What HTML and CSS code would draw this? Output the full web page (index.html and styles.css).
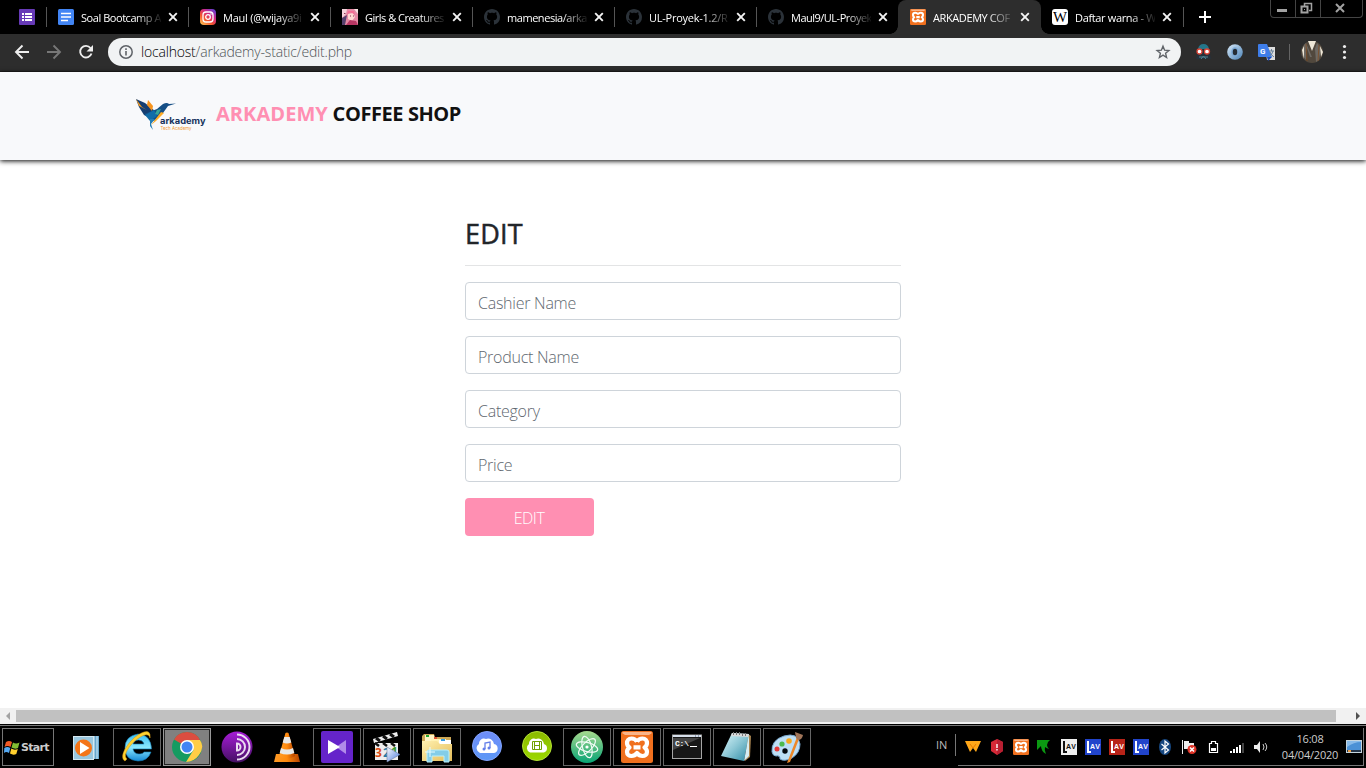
FILE: index.html
```html
<!DOCTYPE html>
<html lang="en">
<head>
<meta charset="utf-8">
<title>ARKADEMY COFFEE SHOP</title>
<link rel="stylesheet" href="styles.css">
</head>
<body>
<svg class="defs" width="0" height="0">
  <defs>
    <symbol id="close" viewBox="0 0 10 10"><path d="M1.200 1.200L8.800 8.800M8.800 1.200L1.200 8.800" stroke="#f4f4f4" stroke-width="1.900"/></symbol>
    <symbol id="github" viewBox="0 0 16 16"><path fill="#2b3239" fill-rule="evenodd" d="M8 0C3.580 0 0 3.580 0 8c0 3.540 2.290 6.530 5.470 7.590.4.07.55-.17.55-.38 0-.19-.01-.82-.01-1.490-2.010.37-2.530-.49-2.690-.94-.09-.23-.48-.94-.82-1.130-.28-.15-.68-.52-.01-.53.63-.01 1.080.58 1.230.82.72 1.210 1.870.87 2.330.66.07-.52.28-.87.51-1.070-1.780-.2-3.640-.89-3.640-3.950 0-.87.31-1.590.82-2.150-.08-.2-.36-1.020.08-2.120 0 0 .67-.21 2.200.82.64-.18 1.320-.27 2-.27s1.360.09 2 .27c1.530-1.040 2.200-.82 2.200-.82.44 1.100.16 1.920.08 2.120.51.56.82 1.270.82 2.150 0 3.070-1.870 3.750-3.650 3.950.29.25.54.73.54 1.480 0 1.070-.01 1.930-.01 2.200 0 .21.15.46.55.38A8.010 8.010 0 0016 8c0-4.420-3.580-8-8-8z"/></symbol>
    <symbol id="xampp" viewBox="0 0 32 32"><rect width="32" height="32" rx="2.500" fill="#f0701e"/><path d="M1 2Q1 1 3 1H29Q31 1 31 2L28 4H4Z" fill="#f9b58a"/><path d="M16 10.500C14 7.500 12 7.500 10.500 7.500C7.500 7.500 6 9.500 6 12C6 14 7 15.500 8.500 16.500C7 17.500 6 19 6 21C6 23.500 8 25 10.500 25C13 25 14.500 24 16 22C17.500 24 19 25 21.500 25C24 25 26 23.500 26 21C26 19 25 17.500 23.500 16.500C25 15.500 26 14 26 12C26 9.500 24.500 7.500 21.500 7.500C20 7.500 18 7.500 16 10.500M12.500 16.300H19.500" fill="none" stroke="#fff" stroke-width="4.200" stroke-linejoin="round"/></symbol>
    <linearGradient id="insta" x1="0" y1="1" x2=".8" y2="0"><stop offset="0" stop-color="#ffd35a"/><stop offset=".4" stop-color="#f5532d"/><stop offset=".7" stop-color="#cf2886"/><stop offset="1" stop-color="#6a3fd0"/></linearGradient>
    <linearGradient id="tor" x2="0" y2="1"><stop stop-color="#a61cd6"/><stop offset="1" stop-color="#451063"/></linearGradient>
    <linearGradient id="ie" x2="0" y2="1"><stop stop-color="#3bbdf0"/><stop offset=".5" stop-color="#8be9ff"/><stop offset="1" stop-color="#1689d5"/></linearGradient>
    <linearGradient id="cone" x2="1" y2="0"><stop stop-color="#ff9b26"/><stop offset=".5" stop-color="#ff8a0e"/><stop offset="1" stop-color="#b64300"/></linearGradient>
    <linearGradient id="folder" x2="1" y2="1"><stop stop-color="#fff1b0"/><stop offset="1" stop-color="#e4bc59"/></linearGradient>
    <linearGradient id="blue" x2="0" y2="1"><stop stop-color="#6f8dfa"/><stop offset="1" stop-color="#5c98f5"/></linearGradient>
    <linearGradient id="green" x2="0" y2="1"><stop stop-color="#8bb900"/><stop offset="1" stop-color="#9cd800"/></linearGradient>
    <linearGradient id="atom" x2="0" y2="1"><stop stop-color="#a7d98e"/><stop offset="1" stop-color="#08a475"/></linearGradient>
    <linearGradient id="note" x2="1" y2="1"><stop stop-color="#def8fc"/><stop offset=".5" stop-color="#8cc7d5"/><stop offset="1" stop-color="#2d8ba5"/></linearGradient>
    <linearGradient id="orb" x2="1" y2="1"><stop stop-color="#d9ebfa"/><stop offset="1" stop-color="#4b82b6"/></linearGradient>
    <linearGradient id="play" x2="1" y2="1"><stop stop-color="#fff"/><stop offset="1" stop-color="#4779dd"/></linearGradient>
  </defs>
</svg>

<header class="browser">
  <div class="tabs">
    <div class="tab pinned">
      <svg class="fav" viewBox="0 0 16 16"><rect width="16" height="16" rx="1" fill="#673ab7"/><path d="M3 5h2M6 5h7M3 8h2M6 8h7M3 11h2M6 11h7" stroke="#fff" stroke-width="1.800"/></svg>
    </div>
    <div class="tab">
      <svg class="fav" viewBox="0 0 16 16"><rect width="16" height="16" rx="1.500" fill="#4285f4"/><path d="M3 4.500h10M3 8h10M3 11.500h7" stroke="#fff" stroke-width="1.600"/></svg>
      <span class="label t-soal">Soal Bootcamp A</span><svg class="close"><use href="#close"/></svg>
    </div>
    <div class="tab">
      <svg class="fav" viewBox="0 0 16 16"><rect width="16" height="16" rx="4" fill="url(#insta)"/><rect x="3" y="3" width="10" height="10" rx="3" fill="none" stroke="#fff" stroke-width="1.300"/><circle cx="8" cy="8" r="2.300" fill="none" stroke="#fff" stroke-width="1.300"/><circle cx="11" cy="5" r=".8" fill="#fff"/></svg>
      <span class="label t-maul">Maul (@wijaya9i</span><svg class="close"><use href="#close"/></svg>
    </div>
    <div class="tab">
      <svg class="fav" viewBox="0 0 16 16"><rect width="16" height="16" fill="#e58aa5"/><path d="M0 0h5L4 5 0 9z" fill="#f3d4dc"/><path d="M0 9l5-3-2 10H0z" fill="#55406d"/><path d="M6 5l5-1 2 4-3 4-4-2z" fill="#ffd9d2"/><path d="M5 6q3-5 8 0l-1-4H6z" fill="#f46d94"/><path d="M4 16l4-5 6 1 2 4z" fill="#b83663"/><path d="M12 0h4v5z" fill="#f9e5e4"/><path d="M2 4.500h1.500M8 7h1M11 7h1" stroke="#8e3554"/></svg>
      <span class="label t-girls">Girls &amp; Creatures</span><svg class="close"><use href="#close"/></svg>
    </div>
    <div class="tab">
      <svg class="fav"><use href="#github"/></svg>
      <span class="label t-mam">mamenesia/arka</span><svg class="close"><use href="#close"/></svg>
    </div>
    <div class="tab">
      <svg class="fav"><use href="#github"/></svg>
      <span class="label t-ul">UL-Proyek-1.2/R</span><svg class="close"><use href="#close"/></svg>
    </div>
    <div class="tab before-active">
      <svg class="fav"><use href="#github"/></svg>
      <span class="label t-maul9">Maul9/UL-Proyek</span><svg class="close"><use href="#close"/></svg>
    </div>
    <div class="tab active">
      <svg class="fav"><use href="#xampp"/></svg>
      <span class="label t-ark">ARKADEMY COF</span><svg class="close"><use href="#close"/></svg>
    </div>
    <div class="tab last">
      <svg class="fav" viewBox="0 0 16 16"><rect width="16" height="16" rx="3" fill="#fff"/><text x="1" y="12.500" class="wiki" textLength="14" lengthAdjust="spacingAndGlyphs">W</text></svg>
      <span class="label t-daftar">Daftar warna - W</span><svg class="close"><use href="#close"/></svg>
    </div>
    <svg class="newtab" viewBox="0 0 12 12"><path d="M6 0v12M0 6h12" stroke="#fff" stroke-width="2"/></svg>
    <div class="window-buttons">
      <span><svg width="25" height="17"><path d="M6 10.500h10" stroke="#a2a2a2" stroke-width="3"/></svg></span>
      <span><svg width="25" height="17"><path d="M8.500 6V3.500h7v7H13" fill="none" stroke="#a2a2a2" stroke-width="1.500"/><rect x="5.500" y="6.500" width="6" height="6" fill="none" stroke="#a2a2a2" stroke-width="2"/><path d="M8 9.500h1" stroke="#a2a2a2"/></svg></span>
      <span class="wide"><svg width="41" height="17"><path d="M15 4l8 8M23 4l-8 8" stroke="#a2a2a2" stroke-width="2"/></svg></span>
    </div>
  </div>
  <div class="toolbar">
    <svg class="nav-icons" width="108" height="36"><g fill="none" stroke-width="1.900"><path d="M29 18H16.500M22.500 11.500L16 18l6.500 6.500" stroke="#eee"/><path d="M47 18h12.500M53.500 11.500L60 18l-6.500 6.500" stroke="#777"/><path d="M90.500 14A5.800 5.800 0 1 0 91.500 19.500" stroke="#eee"/></g><path d="M93 11v6.500h-6.500z" fill="#eee"/></svg>
    <div class="address">
      <svg class="info" viewBox="0 0 16 16"><circle cx="8" cy="8" r="6.200" fill="none" stroke="#5f6368" stroke-width="1.500"/><path d="M8 7v4.500M8 4.300v1.600" stroke="#5f6368" stroke-width="1.600"/></svg>
      <span class="url"><b>localhost</b>/arkademy-static/edit.php</span>
      <svg class="star" viewBox="0 0 16 16"><path d="M8 2.200l1.600 4 4.300.3-3.300 2.800 1 4.200L8 11.200l-3.600 2.300 1-4.200-3.300-2.800 4.300-.3z" fill="none" stroke="#5f6368" stroke-width="1.400"/></svg>
    </div>
    <svg class="extensions" width="185" height="36">
      <path d="M15 25l2-9q1-6 5.500-6t5.500 6l2 9z" fill="#25313b"/><path d="M17 15q1-5 5.500-5t5.500 5z" fill="#24768a"/><path d="M18 23h9M20 25l2.500-3 2.500 3" fill="none" stroke="#508395"/><circle cx="18.500" cy="17.500" r="2.500" fill="#fff" stroke="#d84335" stroke-width="1.300"/><circle cx="26" cy="17.500" r="2.500" fill="#fff" stroke="#d84335" stroke-width="1.300"/>
      <circle cx="54" cy="18" r="7.800" fill="url(#orb)"/><ellipse cx="54" cy="18" rx="3" ry="4" fill="#252d36" stroke="#7daad7" stroke-width="1.500"/>
      <path d="M84 13h10v13H86z" fill="#ddd"/><path d="M78 10h8l5 13H78q-1 0-1-1V11q0-1 1-1" fill="#3e7de9"/><text x="79" y="19.500" class="gicon">G</text><path d="M88 17h5M90.500 15v2M88 23q3-2 4-6M89 18q1 3 4 5" stroke="#68829b" fill="none"/><path d="M86 23h5l-4 4z" fill="#1b4dbe"/>
      <path d="M108.500 10v16" stroke="#646464"/>
      <circle cx="131" cy="18" r="11" fill="#51483d"/><path d="M123 11l2-2 6 14 5-14 4 5-2 12-3 2-1-13-3 8h-2l-3-9-1 12-4-5z" fill="#6d6963"/><path d="M127 7h8l-4 10zM121 16l2-4v13zM139 12l3 6-2 5z" fill="#eee7d7"/><path d="M125 10l1 17M138 11l-1 16" stroke="#824819" stroke-width=".7"/>
      <g fill="#eee"><circle cx="163.500" cy="12.500" r="1.600"/><circle cx="163.500" cy="18" r="1.600"/><circle cx="163.500" cy="23.500" r="1.600"/></g>
    </svg>
  </div>
</header>

<main class="page">
  <nav class="navbar">
    <svg class="logo" viewBox="0 0 72 34">
      <path d="M0 0l9 4 10 8-3 8-8-4-5-8z" fill="#153e72"/><path d="M0 0l6 8 5 3-8-4z" fill="#f59c22"/><path d="M12 1l5 6-1 5-5-6z" fill="#f7941d"/><path d="M8 15l13-5 6-5q4-2 6 0l7-.500-8 2.500-5 7-9 8z" fill="#164f86"/><path d="M9 16l9-5 3 6-7 5z" fill="#116da9"/><path d="M21 11l4-1-3 6-3-1z" fill="#35a69b"/><path d="M25 13l3 1-8 8-5 4z" fill="#ffac24"/><path d="M14 20h5l-4 5 2 6-3-4z" fill="#267eb5"/>
      <text x="24" y="25" class="logo-name" textLength="45.500" lengthAdjust="spacingAndGlyphs">arkademy</text><text x="24.500" y="31" class="logo-sub" textLength="31" lengthAdjust="spacingAndGlyphs">Tech Academy</text>
    </svg>
    <span class="brand"><span class="pink">ARKADEMY</span> COFFEE SHOP</span>
  </nav>
  <form class="form">
    <h3>EDIT</h3>
    <hr>
    <input type="text" placeholder="Cashier Name">
    <input type="text" placeholder="Product Name">
    <input type="text" placeholder="Category">
    <input type="text" placeholder="Price">
    <button type="button">EDIT</button>
  </form>
</main>

<div class="scrollbar"><i class="left"></i><div class="thumb"></div><i class="right"></i></div>

<footer class="taskbar">
  <div class="start"><svg width="16" height="15" viewBox="0 0 16 15"><path d="M2 2q3-2 6 0L6.500 7q-3-2-6 0z" fill="#f05a26"/><path d="M9 2.500q3 2 6.500 0L14 8q-3 1.500-6.500-.5z" fill="#83be32"/><path d="M.3 8q3-2 6 0L5 13q-3-2-5 0z" fill="#55a9f2"/><path d="M7.300 8.500q3 2 6.500.5l-1.500 5q-3 1.500-6.300-.5z" fill="#ffd02e"/></svg><span>Start</span></div>
  <div class="apps">
    <div class="app"><svg viewBox="0 0 32 32"><path d="M10 5h18v23H10z" fill="#68a6cb"/><path d="M23 5v23M26 5v23" stroke="#d3ecfb"/><rect x="2.500" y="5.500" width="20" height="23" fill="#9ac7df" stroke="#d6e8f0"/><circle cx="12.500" cy="17" r="8.500" fill="#f47518"/><path d="M9 11v12l9.500-6z" fill="#fff"/></svg></div>
    <div class="app framed"><svg viewBox="0 0 32 32"><path d="M30.500 18H12q1 5 6 5 4 0 5-2h7q-3 9-13 9Q4 29 4 17T17 3q13 1 13.500 15zM12 13h11q-1-4-5.500-4T12 13z" fill="url(#ie)" stroke="#137fba" stroke-width=".6"/><path d="M4 30C-4 26 10 5 23 1q7-2 6 6-1-4-5-3C13 7 0 24 6 28z" fill="#ffd330" stroke="#d59210" stroke-width=".5"/></svg></div>
    <div class="app framed selected"><svg viewBox="0 0 32 32"><circle cx="16" cy="16" r="15" fill="#159b61"/><path d="M16 16L3 8.500Q7 1 16 1t13 8H16z" fill="#db4d40"/><path d="M16 9h13q5 7-1 15-5 7-13 7l7.500-12z" fill="#ffcd46"/><circle cx="16" cy="16" r="7" fill="#fff"/><circle cx="16" cy="16" r="5.500" fill="#4285f4"/></svg></div>
    <div class="app"><svg viewBox="0 0 32 32"><circle cx="16" cy="16" r="15.500" fill="url(#tor)"/><path d="M16 12.500a3.500 3.500 0 0 1 0 7zM16 8a8 8 0 0 1 0 16M16 3.500a12.500 12.500 0 0 1 0 25" fill="none" stroke="#eadcf0" stroke-width="2"/></svg></div>
    <div class="app"><svg viewBox="0 0 32 32"><path d="M5 23h22l2 8H3z" fill="url(#cone)"/><path d="M14.500 2q1.500-1 3 0L24 25q-8 5-16 0z" fill="url(#cone)"/><path d="M13.300 6h5.400l1.600 5.500q-4.300 2-8.600 0zM10 17q6 3 12 0l1.300 5q-7.300 3-14.600 0z" fill="#e8e8e8"/></svg></div>
    <div class="app framed"><svg viewBox="0 0 32 32"><rect width="32" height="32" rx="2" fill="#6524ca"/><path d="M25 9v14l-10-7z" fill="#b18be9"/><path d="M7 9l12 7-12 7z" fill="#fff"/></svg></div>
    <div class="app framed"><svg viewBox="0 0 32 32"><path d="M2 8L26 1l1 4L3 12z" fill="#eee"/><path d="M5 7l4 3M12 5l4 3M19 3l4 3" stroke="#111" stroke-width="3"/><rect x="4" y="12" width="23" height="17" fill="#eee"/><path d="M4 12l4 3M12 12l4 3M20 12l4 3" stroke="#111" stroke-width="2.500"/><text x="4" y="26" class="clip" fill="#dc4b14">3</text><text x="12" y="26" class="clip" fill="#287aa5">2</text><text x="20" y="25" class="clip" fill="#35952a">1</text><path d="M16 16v15l13-7.500z" fill="url(#play)" stroke="#6b7c9d" stroke-width=".6"/></svg></div>
    <div class="app framed"><svg viewBox="0 0 32 32"><path d="M1 5l2-2h10l1 3h16v22H1z" fill="#cba757"/><rect x="4" y="4" width="9" height="6" fill="#fff4c4"/><rect x="5" y="4" width="3" height="2" fill="#21a631"/><path d="M10 8h15v5H10z" fill="#fff2b4"/><path d="M13 6h3v2h-3z" fill="#dc5434"/><path d="M18 9h12v4H18z" fill="#fff"/><path d="M20 8h4v2h-4z" fill="#349de5"/><path d="M1 10h15l3 3h12v17H1z" fill="url(#folder)"/><path d="M6 31V21q0-2 2-2h18q2 0 2 2v10h-5v-6H11v6z" fill="#83cde8" stroke="#b9effb"/><path d="M9 16v10M4 21h10" stroke="#e8fcff"/></svg></div>
    <div class="app"><svg viewBox="0 0 32 32"><circle cx="16" cy="15" r="14.500" fill="url(#blue)" stroke="#83a3ff"/><path d="M9 22a5 5 0 0 1-1-9 5 5 0 0 1 7-5 6 6 0 0 1 8 5 4.600 4.600 0 0 1 0 9z" fill="#fff"/><path d="M14 18v-6l5-1v6" fill="none" stroke="#647fe9" stroke-width="1.300"/><circle cx="13" cy="18" r="1.500" fill="#647fe9"/><circle cx="18" cy="17" r="1.500" fill="#647fe9"/></svg></div>
    <div class="app"><svg viewBox="0 0 32 32"><circle cx="16" cy="15" r="14.500" fill="url(#green)" stroke="#b3df35"/><path d="M9 21.500a4.800 4.800 0 0 1-1-8.500 5 5 0 0 1 7-5 6 6 0 0 1 8 5 4.500 4.500 0 0 1 0 8.500z" fill="#fff"/><path d="M11.500 10.500h9v8h-9zM13.500 14.500h5M13.500 10.500v8M18.500 10.500v8" stroke="#71a100" fill="none"/></svg></div>
    <div class="app framed"><svg viewBox="0 0 32 32"><circle cx="16" cy="16" r="16" fill="url(#atom)"/><g fill="none" stroke="#f0faf4" stroke-width="1.200"><ellipse cx="16" cy="16" rx="11" ry="4.500" transform="rotate(15 16 16)"/><ellipse cx="16" cy="16" rx="11" ry="4.500" transform="rotate(75 16 16)"/><ellipse cx="16" cy="16" rx="11" ry="4.500" transform="rotate(135 16 16)"/></g><circle cx="16" cy="16" r="1.600" fill="#fff"/></svg></div>
    <div class="app framed"><svg><use href="#xampp"/></svg></div>
    <div class="app framed"><svg viewBox="0 0 32 32"><rect x="1.500" y="4" width="29" height="23.500" fill="#181818" stroke="#a5a5a5"/><path d="M2 5h28" stroke="#d7e0eb" stroke-width="2"/><path d="M2 7h27L2 19z" fill="#444"/><text x="4" y="15" class="cmd" textLength="14">C:\</text><path d="M19 15.500h7" stroke="#fff"/><path d="M24 5h1M27 5h1" stroke="#546783"/></svg></div>
    <div class="app framed"><svg viewBox="0 0 32 32"><path d="M27 3l3 2-1 21-5 4z" fill="#a98551"/><path d="M11 2l17 1-5 27L0 25z" fill="url(#note)"/><path d="M28 3l-5 27 5-5z" fill="#d5edf3"/><path d="M11 2l17 1-1 3-17-1z" fill="#d9d9d9"/><path d="M12.500 1v3M15.500 1v3M18.500 1v3M21.500 2v3M24.500 2v3" stroke="#777"/></svg></div>
    <div class="app framed"><svg viewBox="0 0 32 32"><path d="M1 21Q0 9 13 5q14-4 16 8 0 9-8 14-8 4-12 1 0-4-4-3-3 0-4-4z" fill="#bddff5" stroke="#76a6ce"/><circle cx="6" cy="18" r="2.500" fill="#e33a3a"/><circle cx="11" cy="13" r="2.600" fill="#4cba4c"/><circle cx="18" cy="10" r="2.800" fill="#f8a91c"/><circle cx="14" cy="20" r="2.700" fill="#05090e"/><path d="M26 6l2 2-9 23-3 1z" fill="#ed8828"/><path d="M24 1l8 3q-1 5-5 5l-2-2z" fill="#a17559"/></svg></div>
  </div>
  <div class="tray">
    <span class="lang">IN</span>
    <div class="tray-icons">
      <svg viewBox="0 0 16 16"><path d="M0 2h16l-5 11-3-4-3 4z" fill="#ffa719"/><path d="M5 5l3 4 3-4" fill="none" stroke="#e87b00"/></svg>
      <svg viewBox="0 0 16 16"><path d="M8 0l6 3v9l-6 4-6-4V3z" fill="#d62937"/><path d="M8 0l6 3v9l-6 4z" fill="#b81f31"/><path d="M8 5v4M8 10v1.500" stroke="#fff" stroke-width="1.400"/></svg>
      <svg><use href="#xampp"/></svg>
      <svg viewBox="0 0 16 16"><path d="M0 1h13q-3 2-3 5 0 2 2 4-3-1-4-2-1 3 1 7Q4 12 4 7L0 11z" fill="#0b9912"/></svg>
      <svg viewBox="0 0 16 16" class="lav"><rect width="16" height="16" fill="#eee"/><path d="M3 2v11h3" stroke="#111" stroke-width="2" fill="none"/><text x="5" y="10" fill="#111" textLength="10">AV</text></svg>
      <svg viewBox="0 0 16 16" class="lav"><rect width="16" height="16" fill="#2144cb"/><path d="M3 2v11h3" stroke="#fff" stroke-width="2" fill="none"/><text x="5" y="10" fill="#fff" textLength="10">AV</text></svg>
      <svg viewBox="0 0 16 16" class="lav"><rect width="16" height="16" fill="#b82318"/><path d="M3 2v11h3" stroke="#fff" stroke-width="2" fill="none"/><text x="5" y="10" fill="#fff" textLength="10">AV</text></svg>
      <svg viewBox="0 0 16 16" class="lav"><rect width="16" height="16" fill="#2144cb"/><path d="M3 2v11h3" stroke="#fff" stroke-width="2" fill="none"/><text x="5" y="10" fill="#fff" textLength="10">AV</text></svg>
      <svg viewBox="0 0 16 16"><ellipse cx="8" cy="8" rx="6" ry="8" fill="#164780"/><path d="M4.500 5l7 6L8 14V2l3.500 3-7 6" fill="none" stroke="#fff" stroke-width="1.200"/></svg>
      <svg viewBox="0 0 16 16"><path d="M1.500 1v14" stroke="#eee"/><path d="M3 2h5v2h5v6H3z" fill="#eee"/><circle cx="11" cy="10.500" r="4.500" fill="#df3327"/><path d="M9 8.500l4 4M13 8.500l-4 4" stroke="#fff" stroke-width="1.500"/></svg>
      <svg viewBox="0 0 16 16"><path d="M6.500 2.500h4v2h2v9h-8v-9h2z" fill="none" stroke="#fff" stroke-width="1.200"/><path d="M6 9h5v3H6z" fill="#fff"/></svg>
      <svg viewBox="0 0 16 16"><path d="M2 14v-2M5 14v-4M8 14V8M11 14V6" stroke="#fff" stroke-width="2"/><path d="M14 14V4" stroke="#444" stroke-width="2"/></svg>
      <svg viewBox="0 0 16 16"><path d="M1 6h3l3-4v12l-3-4H1z" fill="#eee"/><path d="M10 5q2 3 0 6M12 4q3.500 4 0 8" fill="none" stroke="#ccc"/></svg>
    </div>
    <div class="clock"><span>16:08</span><span>04/04/2020</span></div>
    <svg class="desktop" viewBox="0 0 16 14"><rect x=".5" y=".5" width="15" height="12" fill="#4b91d6" stroke="#c5d4dd"/><path d="M1 7q7-5 14-5V1H1z" fill="#87bae9"/><path d="M1 10h14v2H1z" fill="#25364b"/><path d="M2 10h3v2H2z" fill="#ed9f45"/></svg>
  </div>
</footer>
</body>
</html>
```
FILE: styles.css
```css
* { box-sizing: border-box; }

body {
  margin: 0;
  width: 1366px;
  height: 768px;
  overflow: hidden;
  display: flex;
  flex-direction: column;
  background: #fff;
  font-family: "Open Sans", "Noto Sans", sans-serif;
}

svg { display: block; flex: none; }
.defs { position: absolute; }

.browser { height: 72px; background: #2d2d2d; border-bottom: 1px solid #211f1f; }
.tabs { display: flex; height: 34px; background: #000; }
.tab { display: flex; align-items: center; width: 142px; height: 34px; padding-left: 12px; position: relative; }
.tab::after { content: ""; position: absolute; right: -1px; top: 7px; height: 20px; width: 1px; background: #555; }
.tab.pinned { width: 46px; padding-left: 19px; }
.tab.active { width: 143px; background: #2d2d2d; border-radius: 8px 8px 0 0; }
.tab.active::before,
.tab.active::after {
  content: "";
  display: block;
  position: absolute;
  top: auto;
  bottom: 0;
  width: 8px;
  height: 8px;
  background: radial-gradient(circle at 0 0, transparent 7.5px, #2d2d2d 8px);
}
.tab.active::before { left: -8px; }
.tab.active::after { right: -8px; transform: scaleX(-1); }
.tab.before-active::after { display: none; }
.tab.last { padding-left: 11px; }
.fav { width: 16px; height: 16px; }
.label {
  width: 80px;
  margin-left: 7px;
  white-space: nowrap;
  color: #fff;
  font-size: 11px;
  line-height: 17px;
  letter-spacing: -.36px;
  -webkit-mask-image: linear-gradient(90deg, #000 68%, rgba(0, 0, 0, .08));
  mask-image: linear-gradient(90deg, #000 68%, rgba(0, 0, 0, .08));
}
.t-soal { letter-spacing: -.45px; }
.t-maul { letter-spacing: -.25px; }
.t-girls { letter-spacing: -.5px; }
.t-mam { letter-spacing: -.45px; }
.t-ul { letter-spacing: -.25px; }
.t-maul9 { letter-spacing: -.5px; }
.t-ark { letter-spacing: -.4px; }
.t-daftar { letter-spacing: -.35px; }
.close { width: 10px; height: 10px; margin-left: 7px; }
.newtab { width: 12px; height: 12px; margin: 11px 0 0 16px; }
.wiki { font: 14px "Liberation Serif", serif; }
.window-buttons { display: flex; height: 18px; margin: 0 3px 0 auto; border: 1px solid #444; border-top: 0; border-radius: 0 0 4px 4px; }
.window-buttons span { width: 25px; height: 17px; border-right: 1px solid #444; }
.window-buttons .wide { width: 41px; border: 0; }

.toolbar { display: flex; height: 36px; }
.address { display: flex; align-items: center; width: 1073px; height: 28px; margin-top: 4px; padding: 0 10px; border-radius: 14px; background: #f1f3f4; }
.info, .star { width: 16px; height: 16px; }
.star { margin-left: auto; }
.url { margin-left: 7px; font-size: 14px; font-weight: 300; line-height: 20px; letter-spacing: -.19px; color: #4f5357; }
.url b { font-weight: 300; color: #000; }
.gicon { font: bold 8px Roboto, sans-serif; fill: #fff; }

.page { height: 636px; background: #fff; }
.navbar { display: flex; height: 88px; padding: 27px 0 0 136px; background: #f8f9fb; box-shadow: 0 1px 5px #000; }
.logo { width: 72px; height: 34px; }
.logo-name { font: bold 9px Inter, sans-serif; fill: #17325c; }
.logo-sub { font: 5px Inter, sans-serif; fill: #f39a35; }
.brand { margin-left: 8px; font-size: 20px; font-weight: 700; line-height: 30px; letter-spacing: -.42px; color: #111; white-space: nowrap; }
.pink { color: #ff8fb2; letter-spacing: .05px; }

.form { display: flex; flex-direction: column; width: 436px; margin: 56px auto 0; }
.form h3 { margin: 0; font-size: 27px; font-weight: 500; line-height: 35px; letter-spacing: .2px; color: #212529; -webkit-text-stroke: .5px #212529; }
.form hr { width: 100%; height: 1px; margin: 14px 0 16px; border: 0; background: #e3e4e5; }
.form input { width: 100%; height: 38px; margin-bottom: 16px; padding: 3px 12px 0; border: 1px solid #ced4da; border-radius: 4px; font: 300 16px "Open Sans", sans-serif; letter-spacing: -.25px; }
.form input::placeholder { color: #5f6870; opacity: 1; }
.form button { width: 129px; height: 38px; padding: 2px 1px 0 0; border: 0; border-radius: 4px; background: #ff8fb2; color: #fff; font: 300 16px "Open Sans", sans-serif; letter-spacing: -.5px; }

.scrollbar { display: flex; align-items: center; height: 16px; background: #f1f1f1; }
.scrollbar i { width: 0; height: 0; border: 4px solid transparent; }
.scrollbar .left { margin: 0 6px 0 2px; border-right-color: #a3a3a3; }
.scrollbar .right { margin-left: 20px; border-left-color: #505050; }
.thumb { width: 1320px; height: 12px; background: #c1c1c1; }

.taskbar { display: flex; height: 44px; padding-top: 4px; background: linear-gradient(#000 1px, #777 1px, #777 2px, #000 2px); }
.start { display: flex; align-items: center; width: 52px; height: 38px; margin-left: 2px; padding-left: 1px; border: 1px solid #777; color: #ccc; font: bold 11px "DejaVu Sans", sans-serif; letter-spacing: -.7px; }
.start span { margin-left: 1px; }
.apps { display: flex; gap: 2px; margin-left: 9px; }
.app { width: 48px; height: 38px; padding: 2px 7px; border: 1px solid transparent; }
.app svg { width: 32px; height: 32px; }
.app.framed { border-color: #666; }
.app.selected { background: #808080; border-color: #999; box-shadow: inset 0 0 0 1px #222; }
.clip { font: bold 12px "Open Sans", sans-serif; }
.cmd { font: bold 8px "Liberation Mono", monospace; fill: #fff; }

.tray { display: flex; width: 428px; height: 38px; margin-left: 125px; background: linear-gradient(#777, #777) 22px 37px / 406px 1px no-repeat; border-right: 1px solid #777; }
.lang { width: 20px; height: 22px; margin-top: 6px; border-right: 1px solid #777; color: #bbb; font-size: 11px; line-height: 22px; }
.tray-icons { display: flex; gap: 8px; margin: 11px 0 0 9px; }
.tray-icons svg { width: 16px; height: 16px; }
.lav text { font: bold 7px "Liberation Sans", sans-serif; }
.clock { display: flex; flex-direction: column; width: 58px; margin-left: 12px; padding-top: 3px; text-align: center; color: #ccc; font-size: 11px; line-height: 16px; letter-spacing: -.2px; }
.desktop { width: 16px; height: 14px; margin: 12px 0 0 7px; }
```
